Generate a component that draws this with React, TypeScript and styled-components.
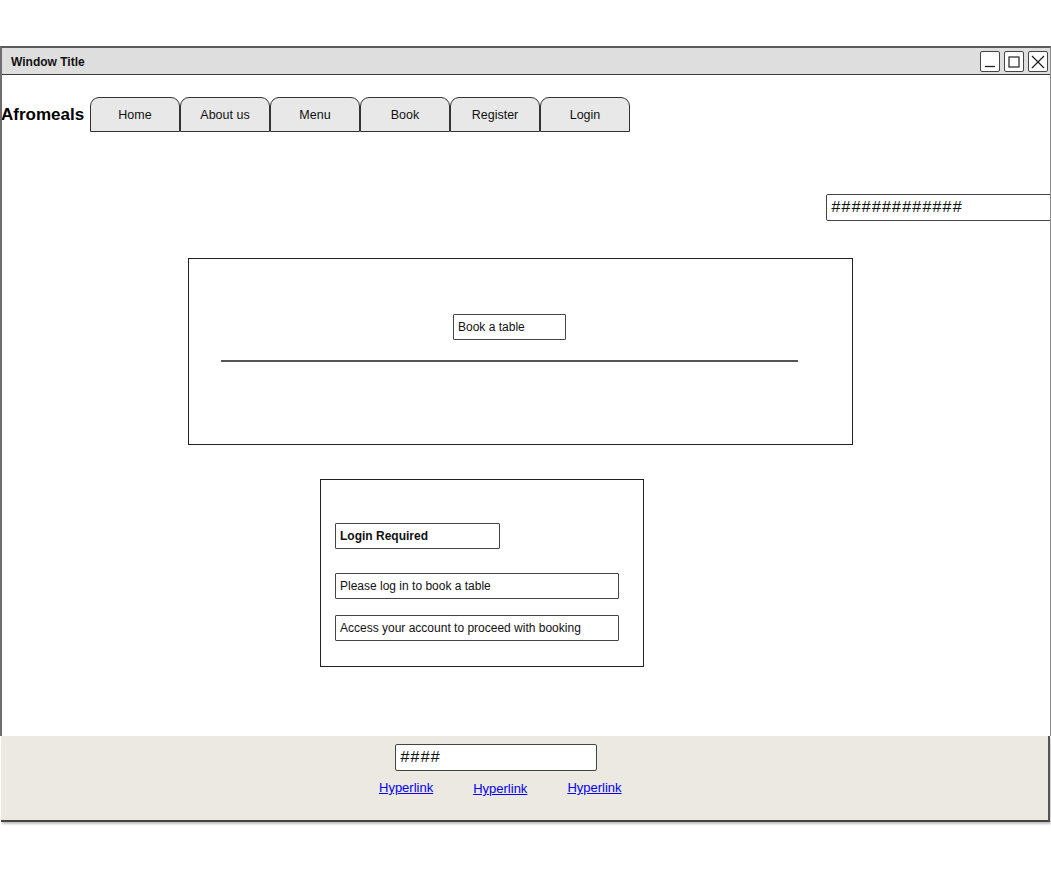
import React from "react";
import styled, { createGlobalStyle } from "styled-components";

const GlobalStyle = createGlobalStyle`
  html, body {
    margin: 0;
    padding: 0;
    background: #ffffff;
    overflow: hidden;
  }
  body {
    font-family: "Liberation Sans", Arial, sans-serif;
    color: #111;
  }
  * { box-sizing: border-box; }
`;

const Page = styled.div`
  width: 1051px;
  height: 881px;
  padding-top: 46px;
  position: relative;
  overflow: hidden;
`;

const Window = styled.div`
  width: 1051px;
  border-top: 2px solid #5a5a5a;
  border-left: 2px solid #6e6e6e;
  border-right: 1px solid #8a8a8a;
  overflow: hidden;
`;

const TitleBar = styled.div`
  height: 27px;
  background: #dedede;
  border-bottom: 1.5px solid #3a3a3a;
  display: flex;
  align-items: center;
  justify-content: space-between;
  padding-left: 9px;
  padding-right: 2px;
  padding-top: 1px;
`;

const Title = styled.span`
  font-weight: bold;
  font-size: 12px;
  color: #111;
`;

const Controls = styled.div`
  display: flex;
  gap: 4px;
`;

const ControlButton = styled.div`
  width: 20px;
  height: 21px;
  border: 1.5px solid #444;
  border-radius: 2px;
  background: #fff;
  display: flex;
  align-items: center;
  justify-content: center;
`;

const Body = styled.div`
  height: 661px;
  display: flex;
  flex-direction: column;
  align-items: flex-start;
`;

const NavRow = styled.div`
  margin-top: 22px;
  display: flex;
  align-items: center;
  gap: 7px;
`;

const Brand = styled.span`
  font-family: "Liberation Sans", Arial, sans-serif;
  font-weight: bold;
  font-size: 17px;
  color: #000;
  width: 82px;
  margin-left: -1px;
`;

const Tabs = styled.div`
  display: flex;
`;

const Tab = styled.div`
  width: 90px;
  height: 35px;
  border: 1.5px solid #333;
  border-bottom-width: 1px;
  border-radius: 9px 9px 0 0;
  background: #e8e8e8;
  display: flex;
  align-items: center;
  justify-content: center;
  font-size: 12.5px;
  color: #111;
  padding-top: 1px;
`;

const HashField = styled.div<{ $width: number; $left: number; $top: number }>`
  margin-left: ${(p) => p.$left}px;
  margin-top: ${(p) => p.$top}px;
  width: ${(p) => p.$width}px;
  height: 27px;
  border: 1.5px solid #444;
  border-radius: 2px;
  background: #fff;
  display: flex;
  align-items: center;
  padding-left: 4px;
  font-family: "Liberation Mono", "Courier New", monospace;
  font-size: 16.5px;
  letter-spacing: 0.2px;
  color: #111;
  white-space: nowrap;
  overflow: hidden;
`;

const Panel = styled.div<{ $left: number; $top: number; $width: number; $height: number; $pad: string }>`
  margin-left: ${(p) => p.$left}px;
  margin-top: ${(p) => p.$top}px;
  width: ${(p) => p.$width}px;
  height: ${(p) => p.$height}px;
  border: 1px solid #222;
  padding: ${(p) => p.$pad};
  display: flex;
  flex-direction: column;
  align-items: flex-start;
`;

const Label = styled.div<{ $width: number; $bold?: boolean; $left?: number; $gap?: number }>`
  width: ${(p) => p.$width}px;
  height: 26px;
  margin-left: ${(p) => p.$left ?? 0}px;
  margin-top: ${(p) => p.$gap ?? 0}px;
  border: 1.3px solid #444;
  border-radius: 1px;
  background: #fff;
  display: flex;
  align-items: center;
  padding-left: 4px;
  font-size: 12px;
  font-weight: ${(p) => (p.$bold ? "bold" : "normal")};
  color: #111;
  white-space: nowrap;
`;

const Rule = styled.div`
  margin-left: 32px;
  margin-top: 20px;
  width: 577px;
  height: 1.5px;
  background: #555;
`;

const Footer = styled.div`
  margin-left: 1px;
  width: 1049px;
  height: 86px;
  background: #ece9e3;
  border-right: 2px solid #555;
  border-bottom: 2px solid #444;
  box-shadow: 1px 2px 2px rgba(0, 0, 0, 0.25);
  display: flex;
  flex-direction: column;
  align-items: flex-start;
`;

const Links = styled.div`
  margin-left: 378px;
  margin-top: 9px;
  display: flex;
  gap: 40px;
  align-items: flex-start;
`;

const Link = styled.a<{ $shift: number }>`
  font-size: 13px;
  color: #0000ee;
  text-decoration: underline;
  margin-top: ${(p) => p.$shift}px;
  cursor: pointer;
`;

const tabs = ["Home", "About us", "Menu", "Book", "Register", "Login"];

export default function App() {
  return (
    <>
      <GlobalStyle />
      <Page>
        <Window>
          <TitleBar>
            <Title>Window Title</Title>
            <Controls>
              <ControlButton>
                <svg width="12" height="12" viewBox="0 0 12 12">
                  <line x1="1" y1="10.5" x2="11" y2="10.5" stroke="#222" strokeWidth="1.3" />
                </svg>
              </ControlButton>
              <ControlButton>
                <svg width="12" height="12" viewBox="0 0 12 12">
                  <rect x="1" y="1" width="10" height="10" fill="none" stroke="#222" strokeWidth="1.2" />
                </svg>
              </ControlButton>
              <ControlButton>
                <svg width="14" height="14" viewBox="0 0 14 14">
                  <line x1="1" y1="1" x2="13" y2="13" stroke="#222" strokeWidth="1.2" />
                  <line x1="13" y1="1" x2="1" y2="13" stroke="#222" strokeWidth="1.2" />
                </svg>
              </ControlButton>
            </Controls>
          </TitleBar>
          <Body>
            <NavRow>
              <Brand>Afromeals</Brand>
              <Tabs>
                {tabs.map((t) => (
                  <Tab key={t}>{t}</Tab>
                ))}
              </Tabs>
            </NavRow>
            <HashField $width={240} $left={824} $top={62}>
              #############
            </HashField>
            <Panel $left={186} $top={37} $width={665} $height={187} $pad="55px 0 0 0">
              <Label $width={113} $left={264}>
                Book a table
              </Label>
              <Rule />
            </Panel>
            <Panel $left={318} $top={34} $width={324} $height={188} $pad="43px 0 0 14px">
              <Label $width={165} $bold>
                Login Required
              </Label>
              <Label $width={284} $gap={24}>
                Please log in to book a table
              </Label>
              <Label $width={284} $gap={16}>
                Access your account to proceed with booking
              </Label>
            </Panel>
          </Body>
        </Window>
        <Footer>
          <HashField $width={202} $left={394} $top={8}>
            ####
          </HashField>
          <Links>
            <Link $shift={0}>Hyperlink</Link>
            <Link $shift={1}>Hyperlink</Link>
            <Link $shift={0}>Hyperlink</Link>
          </Links>
        </Footer>
      </Page>
    </>
  );
}
